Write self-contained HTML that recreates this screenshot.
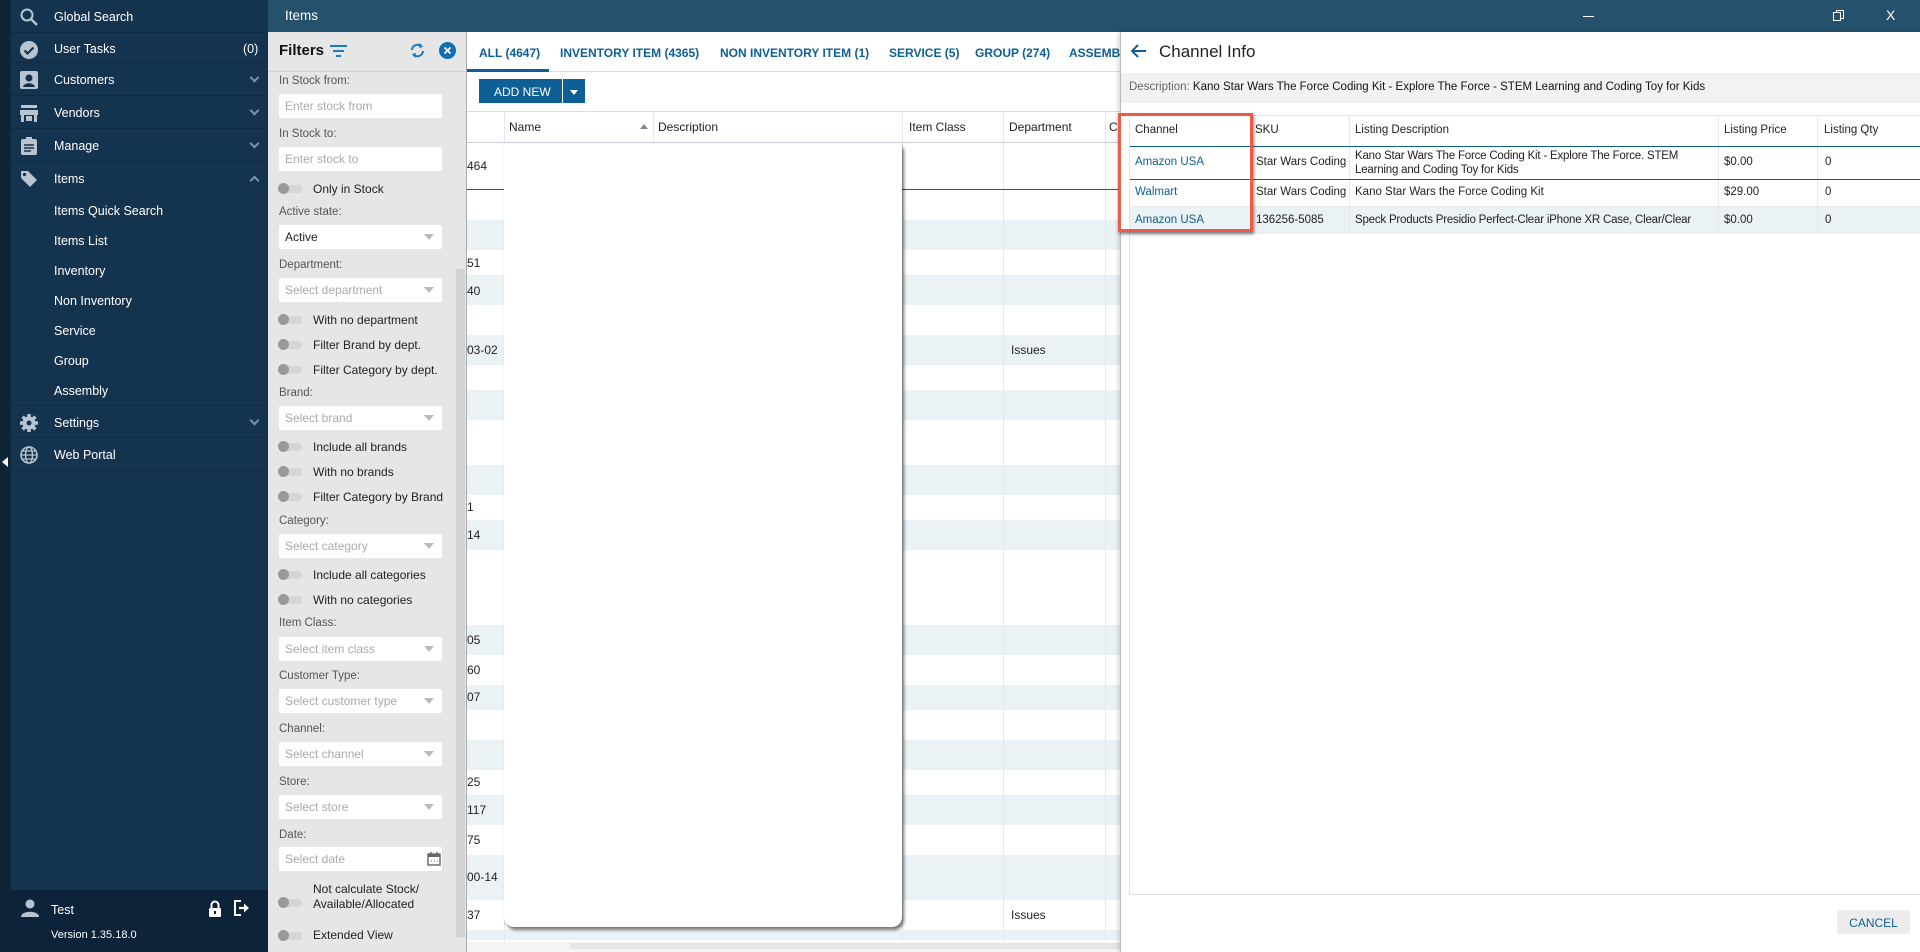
<!DOCTYPE html>
<html><head><meta charset="utf-8"><style>
*{margin:0;padding:0;box-sizing:border-box}
body{width:1920px;height:952px;overflow:hidden;font-family:"Liberation Sans",sans-serif;font-size:12px;color:#222;background:#fff;position:relative}
.a{position:absolute;white-space:nowrap}
#sb{position:absolute;left:0;top:0;width:268px;height:952px;background:#14334f}
#strip{position:absolute;left:0;top:0;width:11px;height:952px;background:#0d2439}
.nav{position:absolute;left:11px;width:257px;height:33px;border-bottom:1px solid #0e2a43;color:#fff;font-size:12.5px}
.nav span{position:absolute;left:43px;top:10px}
.nav i{position:absolute;left:9px;top:8px;width:18px;height:18px}
.chev{position:absolute;right:10px;top:11px;width:7px;height:7px;border-right:2px solid #7f93a6;border-bottom:2px solid #7f93a6;transform:rotate(45deg)}
.sub{position:absolute;left:54px;color:#fff;font-size:12.5px}
#fp{position:absolute;left:268px;top:32px;width:199px;height:920px;background:#e6e6e6}
.lb{position:absolute;left:11px;color:#555;font-size:11.5px}
.in{position:absolute;left:11px;width:163px;height:24px;background:#fff;color:#aaa;font-size:12px;padding:5px 0 0 6px;border-radius:2px}
.in.s:after{content:"";position:absolute;right:8px;top:9px;border-left:5px solid transparent;border-right:5px solid transparent;border-top:6px solid #bbb}
.tg{position:absolute;left:11px;width:23px;height:8px;background:#d6d6d6;border-radius:4px}
.tg:before{content:"";position:absolute;left:-1px;top:-2px;width:11px;height:11px;border-radius:50%;background:#999}
.tt{position:absolute;left:45px;color:#222;font-size:12px}
.row{position:absolute;left:467px;width:653px;background:#eaf2f6}
.vl{position:absolute;width:1px;background:#e2e8ec}
.cell{position:absolute;font-size:12px;color:#222;white-space:nowrap}
.ci .cell{font-size:11.5px}
.tab{position:absolute;top:46px;color:#0e5f96;font-weight:bold;font-size:12px}
</style></head><body>
<div id="sb"></div><div id="strip"></div>
<div class="a" style="left:2px;top:457px;border-top:5px solid transparent;border-bottom:5px solid transparent;border-right:6px solid #fff"></div>
<div class="nav" style="top:0"><i><svg width="18" height="18" viewBox="0 0 18 18"><circle cx="7" cy="7" r="5.5" fill="none" stroke="#b8c4cf" stroke-width="2"/><path d="M11 11l6 6" stroke="#b8c4cf" stroke-width="2.4"/></svg></i><span>Global Search</span></div>
<div class="nav" style="top:33px;height:30px"><i><svg width="18" height="18"><circle cx="9" cy="9" r="9" fill="#b8c4cf"/><path d="M4.5 9.5l3 3 6-6" stroke="#14334f" stroke-width="2.2" fill="none"/></svg></i><span style="top:9px">User Tasks</span><span style="left:232px;top:9px">(0)</span></div>
<div class="nav" style="top:63px"><i><svg width="18" height="18"><rect x="0" y="0" width="18" height="18" rx="2" fill="#b8c4cf"/><circle cx="9" cy="7" r="3.5" fill="#14334f"/><path d="M3 16c1-5 11-5 12 0z" fill="#14334f"/></svg></i><span>Customers</span><b class="chev"></b></div>
<div class="nav" style="top:96px"><i><svg width="18" height="18"><rect x="1" y="1" width="16" height="3" fill="#b8c4cf"/><rect x="0" y="6" width="18" height="5" fill="#b8c4cf"/><rect x="1" y="11" width="3" height="7" fill="#b8c4cf"/><rect x="14" y="11" width="3" height="7" fill="#b8c4cf"/><rect x="6" y="12" width="6" height="5" fill="#b8c4cf"/></svg></i><span>Vendors</span><b class="chev"></b></div>
<div class="nav" style="top:129px"><i><svg width="18" height="18"><rect x="1" y="2" width="16" height="16" rx="2" fill="#b8c4cf"/><rect x="6" y="0" width="6" height="4" fill="#b8c4cf"/><path d="M4 8h10M4 11h10M4 14h7" stroke="#14334f" stroke-width="1.5"/></svg></i><span>Manage</span><b class="chev"></b></div>
<div class="nav" style="top:162px;border:none"><i><svg width="18" height="18"><path d="M1 1h7l9 9-7 7-9-9z" fill="#b8c4cf"/><circle cx="4.5" cy="4.5" r="1.6" fill="#14334f"/></svg></i><span>Items</span><b class="chev" style="transform:rotate(225deg);top:15px"></b></div>
<div class="sub" style="top:204px">Items Quick Search</div>
<div class="sub" style="top:234px">Items List</div>
<div class="sub" style="top:264px">Inventory</div>
<div class="sub" style="top:294px">Non Inventory</div>
<div class="sub" style="top:324px">Service</div>
<div class="sub" style="top:354px">Group</div>
<div class="sub" style="top:384px">Assembly</div>
<div class="nav" style="top:405px;border-top:1px solid #0e2a43"><i><svg width="18" height="18"><circle cx="9" cy="9" r="6.5" fill="#b8c4cf"/><path d="M9 0v18M0 9h18M2.6 2.6l12.8 12.8M15.4 2.6L2.6 15.4" stroke="#b8c4cf" stroke-width="3.5"/><circle cx="9" cy="9" r="2.5" fill="#14334f"/></svg></i><span>Settings</span><b class="chev"></b></div>
<div class="nav" style="top:438px"><i><svg width="18" height="18"><circle cx="9" cy="9" r="8" fill="none" stroke="#b8c4cf" stroke-width="1.6"/><ellipse cx="9" cy="9" rx="3.5" ry="8" fill="none" stroke="#b8c4cf" stroke-width="1.4"/><path d="M1 9h16M2.5 5h13M2.5 13h13" stroke="#b8c4cf" stroke-width="1.3"/></svg></i><span>Web Portal</span></div>
<div class="a" style="left:0;top:890px;width:268px;height:62px;background:#0c2339"></div>
<svg class="a" style="left:20px;top:899px" width="20" height="18"><circle cx="10" cy="5" r="4.5" fill="#b8c4cf"/><path d="M1 18c0-7 18-7 18 0z" fill="#b8c4cf"/></svg>
<div class="a" style="left:51px;top:903px;color:#fff;font-size:12.5px">Test</div>
<div class="a" style="left:51px;top:929px;color:#fff;font-size:11px">Version 1.35.18.0</div>
<svg class="a" style="left:208px;top:900px" width="14" height="17"><path d="M3.5 8V5a3.5 3.5 0 017 0v3" fill="none" stroke="#fff" stroke-width="2"/><rect x="1" y="8" width="12" height="9" rx="1" fill="#fff"/><rect x="6" y="11" width="2" height="3" fill="#0c2339"/></svg>
<svg class="a" style="left:234px;top:900px" width="17" height="16"><path d="M7 1H1v14h6" fill="none" stroke="#fff" stroke-width="2"/><path d="M5 8h8" stroke="#fff" stroke-width="2.2"/><path d="M10 3.5l5 4.5-5 4.5z" fill="#fff"/></svg>

<!-- header -->
<div class="a" style="left:268px;top:0;width:1652px;height:32px;background:#25516c"></div>
<div class="a" style="left:285px;top:8px;color:#fff;font-size:13.5px">Items</div>
<div class="a" style="left:1583px;top:16px;width:11px;height:1px;background:#fff"></div>
<div class="a" style="left:1836px;top:10px;width:8px;height:9px;border:1px solid #fff"></div>
<div class="a" style="left:1833px;top:12px;width:8px;height:9px;border:1px solid #fff;background:#25516c"></div>
<div class="a" style="left:1886px;top:7px;color:#fff;font-size:14px">X</div>

<!-- filters -->
<div id="fp">
<div class="a" style="left:11px;top:10px;font-weight:bold;font-size:15px;color:#111">Filters</div>
<svg class="a" style="left:62px;top:13px" width="17" height="12"><path d="M0 1h17M3 6h11M6 11h5" stroke="#1a7cc0" stroke-width="2"/></svg>
<svg class="a" style="left:141px;top:10px" width="17" height="17"><path d="M3 8a5.5 5.5 0 019.5-3.5M14 9a5.5 5.5 0 01-9.5 3.5" fill="none" stroke="#1a7cc0" stroke-width="2"/><path d="M11 1l3 4-4 1zM6 16l-3-4 4-1z" fill="#1a7cc0"/></svg>
<svg class="a" style="left:171px;top:10px" width="17" height="17"><circle cx="8.5" cy="8.5" r="8.5" fill="#0e6fb5"/><path d="M5.5 5.5l6 6M11.5 5.5l-6 6" stroke="#fff" stroke-width="1.8"/></svg>
<div class="a" style="left:0;top:39px;width:199px;height:1px;background:#d4d4d4"></div>
<div class="a" style="left:188px;top:237px;width:9px;height:668px;background:#d3d3d3"></div>
<div class="lb" style="top:43px">In Stock from:</div><div class="in" style="top:62px">Enter stock from</div>
<div class="lb" style="top:96px">In Stock to:</div><div class="in" style="top:115px">Enter stock to</div>
<div class="tg" style="top:153px"></div><div class="tt" style="top:150px">Only in Stock</div>
<div class="lb" style="top:174px">Active state:</div><div class="in s" style="top:193px;color:#222">Active</div>
<div class="lb" style="top:227px">Department:</div><div class="in s" style="top:246px">Select department</div>
<div class="tg" style="top:284px"></div><div class="tt" style="top:281px">With no department</div>
<div class="tg" style="top:309px"></div><div class="tt" style="top:306px">Filter Brand by dept.</div>
<div class="tg" style="top:334px"></div><div class="tt" style="top:331px">Filter Category by dept.</div>
<div class="lb" style="top:355px">Brand:</div><div class="in s" style="top:374px">Select brand</div>
<div class="tg" style="top:411px"></div><div class="tt" style="top:408px">Include all brands</div>
<div class="tg" style="top:436px"></div><div class="tt" style="top:433px">With no brands</div>
<div class="tg" style="top:461px"></div><div class="tt" style="top:458px">Filter Category by Brand</div>
<div class="lb" style="top:483px">Category:</div><div class="in s" style="top:502px">Select category</div>
<div class="tg" style="top:539px"></div><div class="tt" style="top:536px">Include all categories</div>
<div class="tg" style="top:564px"></div><div class="tt" style="top:561px">With no categories</div>
<div class="lb" style="top:585px">Item Class:</div><div class="in s" style="top:605px">Select item class</div>
<div class="lb" style="top:638px">Customer Type:</div><div class="in s" style="top:657px">Select customer type</div>
<div class="lb" style="top:691px">Channel:</div><div class="in s" style="top:710px">Select channel</div>
<div class="lb" style="top:744px">Store:</div><div class="in s" style="top:763px">Select store</div>
<div class="lb" style="top:797px">Date:</div><div class="in" style="top:815px">Select date</div>
<svg class="a" style="left:159px;top:820px" width="14" height="14"><rect x="1" y="2" width="12" height="11" fill="none" stroke="#666" stroke-width="1.4"/><rect x="1" y="2" width="12" height="3" fill="#666"/><path d="M4 0v3M10 0v3" stroke="#666" stroke-width="1.4"/><path d="M4 9h1M7 9h1M10 9h1" stroke="#666"/></svg>
<div class="tg" style="top:867px"></div><div class="tt" style="top:850px;line-height:15px">Not calculate Stock/<br>Available/Allocated</div>
<div class="tg" style="top:900px"></div><div class="tt" style="top:896px">Extended View</div>
</div>

<!-- grid -->
<div class="a" style="left:466px;top:32px;width:1px;height:920px;background:#aaa"></div>
<div class="tab" style="left:479px">ALL (4647)</div>
<div class="tab" style="left:560px">INVENTORY ITEM (4365)</div>
<div class="tab" style="left:720px">NON INVENTORY ITEM (1)</div>
<div class="tab" style="left:889px">SERVICE (5)</div>
<div class="tab" style="left:975px">GROUP (274)</div>
<div class="tab" style="left:1069px">ASSEMBLY</div>
<div class="a" style="left:467px;top:71px;width:653px;height:1px;background:#ddd"></div>
<div class="a" style="left:467px;top:69px;width:82px;height:3px;background:#0e5f96"></div>
<div class="a" style="left:479px;top:79px;width:83px;height:24px;background:#0e5f96;color:#fff;font-size:12px;padding:6px 0 0 15px">ADD NEW</div>
<div class="a" style="left:563px;top:79px;width:22px;height:24px;background:#0e5f96"></div>
<div class="a" style="left:570px;top:90px;border-left:4px solid transparent;border-right:4px solid transparent;border-top:5px solid #fff"></div>
<div class="a" style="left:467px;top:111px;width:653px;height:1px;background:#ddd"></div>
<div class="row" style="top:220px;height:30px"></div><div class="row" style="top:275px;height:30px"></div><div class="row" style="top:335px;height:30px"></div><div class="row" style="top:390px;height:30px"></div><div class="row" style="top:465px;height:30px"></div><div class="row" style="top:520px;height:30px"></div><div class="row" style="top:625px;height:30px"></div><div class="row" style="top:685px;height:25px"></div><div class="row" style="top:740px;height:30px"></div><div class="row" style="top:795px;height:30px"></div><div class="row" style="top:855px;height:45px"></div><div class="row" style="top:930px;height:10px"></div>
<div class="vl" style="left:504px;top:112px;height:830px"></div>
<div class="vl" style="left:653px;top:112px;height:31px"></div>
<div class="vl" style="left:902px;top:112px;height:830px"></div>
<div class="vl" style="left:1003px;top:112px;height:830px"></div>
<div class="vl" style="left:1105px;top:112px;height:830px"></div>
<div class="a" style="left:467px;top:142px;width:653px;height:1px;background:#ccd"></div>
<div class="a" style="left:467px;top:189px;width:653px;height:1px;background:#0e5f96"></div>
<div class="cell" style="left:509px;top:120px">Name</div>
<div class="a" style="left:640px;top:124px;border-left:4px solid transparent;border-right:4px solid transparent;border-bottom:5px solid #888"></div>
<div class="cell" style="left:658px;top:120px">Description</div>
<div class="cell" style="left:909px;top:120px">Item Class</div>
<div class="cell" style="left:1009px;top:120px">Department</div>
<div class="cell" style="left:1109px;top:120px">C</div>
<div class="cell" style="left:467px;top:159px">464</div>
<div class="cell" style="left:467px;top:256px">51</div>
<div class="cell" style="left:467px;top:284px">40</div>
<div class="cell" style="left:467px;top:343px">03-02</div>
<div class="cell" style="left:1011px;top:343px">Issues</div>
<div class="cell" style="left:467px;top:500px">1</div>
<div class="cell" style="left:467px;top:528px">14</div>
<div class="cell" style="left:467px;top:633px">05</div>
<div class="cell" style="left:467px;top:663px">60</div>
<div class="cell" style="left:467px;top:690px">07</div>
<div class="cell" style="left:467px;top:775px">25</div>
<div class="cell" style="left:467px;top:803px">117</div>
<div class="cell" style="left:467px;top:833px">75</div>
<div class="cell" style="left:467px;top:870px">00-14</div>
<div class="cell" style="left:467px;top:908px">37</div>
<div class="cell" style="left:1011px;top:908px">Issues</div>
<div class="a" style="left:467px;top:942px;width:653px;height:10px;background:#f4f4f4"></div>
<div class="a" style="left:570px;top:943px;width:550px;height:6px;background:#e6e6e6"></div>
<div class="a" style="left:504px;top:143px;width:398px;height:784px;background:#fff;border-radius:0 6px 10px 10px;box-shadow:2px 3px 3px rgba(0,0,0,.55)"></div>

<!-- channel info -->
<div class="ci">
<div class="a" style="left:1120px;top:32px;width:800px;height:920px;background:#fff;border-left:1px solid #bbb;box-shadow:-2px 0 4px rgba(0,0,0,.15)"></div>
<svg class="a" style="left:1131px;top:44px" width="16" height="14"><path d="M15 7H2M7 1L1 7l6 6" fill="none" stroke="#0e5f96" stroke-width="2"/></svg>
<div class="a" style="left:1159px;top:42px;font-size:17px;color:#222">Channel Info</div>
<div class="a" style="left:1121px;top:73px;width:799px;height:30px;background:#f2f2f2"></div>
<div class="a" style="left:1129px;top:81px;font-size:11.5px;color:#666">Description: <span style="color:#111">Kano Star Wars The Force Coding Kit - Explore The Force - STEM Learning and Coding Toy for Kids</span></div>
<div class="a" style="left:1129px;top:115px;width:791px;height:780px;border-left:1px solid #e2e2e2;border-top:1px solid #e2e2e2;border-bottom:1px solid #e2e2e2"></div>
<div class="a" style="left:1130px;top:206px;width:790px;height:28px;background:#eaf2f6"></div>
<div class="vl" style="left:1250px;top:116px;height:118px"></div>
<div class="vl" style="left:1349px;top:116px;height:118px"></div>
<div class="vl" style="left:1718px;top:116px;height:118px"></div>
<div class="vl" style="left:1817px;top:116px;height:118px"></div>
<div class="a" style="left:1130px;top:146px;width:790px;height:1px;background:#0e5f96"></div>
<div class="a" style="left:1130px;top:179px;width:790px;height:1px;background:#0e5f96"></div>
<div class="a" style="left:1130px;top:206px;width:790px;height:1px;background:#e8e8e8"></div>
<div class="cell" style="left:1135px;top:124px">Channel</div>
<div class="cell" style="left:1255px;top:124px">SKU</div>
<div class="cell" style="left:1355px;top:124px">Listing Description</div>
<div class="cell" style="left:1724px;top:124px">Listing Price</div>
<div class="cell" style="left:1824px;top:124px">Listing Qty</div>
<div class="cell" style="left:1135px;top:156px;color:#0e5f96">Amazon USA</div>
<div class="cell" style="left:1256px;top:156px;width:93px;overflow:hidden">Star Wars Coding</div>
<div class="cell" style="left:1355px;top:149px;line-height:14px;letter-spacing:-0.2px">Kano Star Wars The Force Coding Kit - Explore The Force. STEM<br>Learning and Coding Toy for Kids</div>
<div class="cell" style="left:1724px;top:156px">$0.00</div>
<div class="cell" style="left:1825px;top:156px">0</div>
<div class="cell" style="left:1135px;top:186px;color:#0e5f96">Walmart</div>
<div class="cell" style="left:1256px;top:186px;width:93px;overflow:hidden">Star Wars Coding</div>
<div class="cell" style="left:1355px;top:186px">Kano Star Wars the Force Coding Kit</div>
<div class="cell" style="left:1724px;top:186px">$29.00</div>
<div class="cell" style="left:1825px;top:186px">0</div>
<div class="cell" style="left:1135px;top:214px;color:#0e5f96">Amazon USA</div>
<div class="cell" style="left:1256px;top:214px">136256-5085</div>
<div class="cell" style="left:1355px;top:214px;letter-spacing:-0.2px">Speck Products Presidio Perfect-Clear iPhone XR Case, Clear/Clear</div>
<div class="cell" style="left:1724px;top:214px">$0.00</div>
<div class="cell" style="left:1825px;top:214px">0</div>
<div class="a" style="left:1118px;top:113px;width:135px;height:119px;border:3px solid #ee5a48;box-shadow:1px 2px 3px rgba(0,0,0,.5)"></div>
<div class="a" style="left:1837px;top:910px;width:73px;height:24px;background:#ececec;color:#0e5f96;font-size:12px;padding:6px 0 0 0;text-align:center">CANCEL</div>
</div>
</body></html>
